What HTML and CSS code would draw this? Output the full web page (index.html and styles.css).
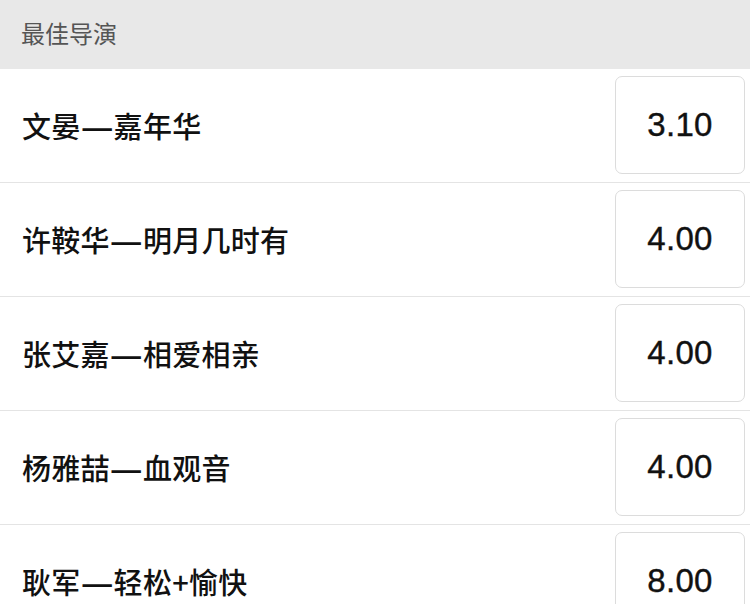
FILE: index.html
```html
<!DOCTYPE html>
<html lang="zh-CN">
<head>
<meta charset="utf-8">
<link rel="stylesheet" href="styles.css">
</head>
<body>
<div class="page">
  <div class="header">最佳导演</div>
  <div class="row"><div class="name">文晏<span class="dash">—</span>嘉年华</div><div class="odds">3.10</div></div>
  <div class="row"><div class="name">许鞍华<span class="dash">—</span>明月几时有</div><div class="odds">4.00</div></div>
  <div class="row"><div class="name">张艾嘉<span class="dash">—</span>相爱相亲</div><div class="odds">4.00</div></div>
  <div class="row"><div class="name">杨雅喆<span class="dash">—</span>血观音</div><div class="odds">4.00</div></div>
  <div class="row"><div class="name">耿军<span class="dash">—</span>轻松+愉快</div><div class="odds">8.00</div></div>
</div>
</body>
</html>
```
FILE: styles.css
```css
html, body {
  margin: 0;
  padding: 0;
  background: #ffffff;
}
.page {
  width: 750px;
  height: 604px;
  overflow: hidden;
  font-family: "Noto Sans CJK SC", "Noto Sans", sans-serif;
}
.header {
  height: 69px;
  box-sizing: border-box;
  background: #e8e8e8;
  color: #555555;
  font-size: 24px;
  line-height: 66px;
  padding-left: 21px;
  padding-bottom: 3px;
}
.row {
  display: flex;
  align-items: center;
  justify-content: space-between;
  padding: 7px 5px 8px 22px;
  border-bottom: 1px solid #e4e4e4;
}
.name {
  font-size: 29px;
  font-weight: 500;
  color: #111111;
  letter-spacing: 0.3px;
}
.dash {
  display: inline-block;
  width: 33px;
  transform: scaleX(1.25);
  text-align: center;
  font-weight: 700;
}
.odds {
  width: 130px;
  height: 98px;
  box-sizing: border-box;
  border: 1px solid #dcdcdc;
  border-radius: 7px;
  display: flex;
  align-items: center;
  justify-content: center;
  font-family: "Liberation Sans", Arial, sans-serif;
  font-size: 33px;
  letter-spacing: 0.3px;
  -webkit-text-stroke: 0.4px #111111;
  color: #111111;
}
```
